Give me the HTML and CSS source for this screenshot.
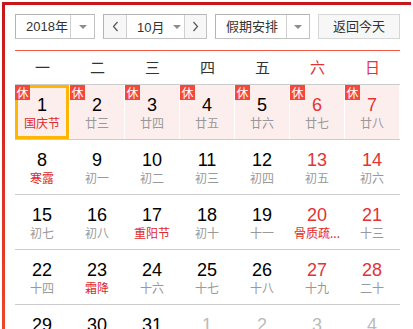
FILE: index.html
```html
<!DOCTYPE html>
<html lang="zh">
<head>
<meta charset="utf-8">
<title>日历</title>
<link rel="stylesheet" href="styles.css">
</head>
<body>
<div class="cal">
  <div class="toolbar">
    <div class="sel sel-year">
      <span class="sel-text">2018年</span>
      <span class="sel-arrow"><i class="tri"></i></span>
    </div>
    <div class="month-group">
      <span class="nav nav-prev"><svg width="7" height="11" viewBox="0 0 7 11"><polyline points="5.5,1 1.5,5.5 5.5,10" fill="none" stroke="#555" stroke-width="1.2"/></svg></span>
      <span class="month"><span class="month-text">10月</span><i class="tri"></i></span>
      <span class="nav nav-next"><svg width="7" height="11" viewBox="0 0 7 11"><polyline points="1.5,1 5.5,5.5 1.5,10" fill="none" stroke="#555" stroke-width="1.2"/></svg></span>
    </div>
    <div class="sel sel-holiday">
      <span class="sel-text">假期安排</span>
      <span class="sel-arrow"><i class="tri"></i></span>
    </div>
    <button class="today">返回今天</button>
  </div>
  <div class="divider"></div>
  <div class="weekdays">
    <span>一</span><span>二</span><span>三</span><span>四</span><span>五</span><span class="wkend">六</span><span class="wkend">日</span>
  </div>
  <div class="grid">
    <div class="row">
      <div class="cell rest selected"><i class="badge">休</i><span class="num">1</span><span class="lunar fest">国庆节</span></div>
      <div class="cell rest"><i class="badge">休</i><span class="num">2</span><span class="lunar">廿三</span></div>
      <div class="cell rest"><i class="badge">休</i><span class="num">3</span><span class="lunar">廿四</span></div>
      <div class="cell rest"><i class="badge">休</i><span class="num">4</span><span class="lunar">廿五</span></div>
      <div class="cell rest"><i class="badge">休</i><span class="num">5</span><span class="lunar">廿六</span></div>
      <div class="cell rest weekend"><i class="badge">休</i><span class="num">6</span><span class="lunar">廿七</span></div>
      <div class="cell rest weekend"><i class="badge">休</i><span class="num">7</span><span class="lunar">廿八</span></div>
    </div>
    <div class="row">
      <div class="cell"><span class="num">8</span><span class="lunar fest">寒露</span></div>
      <div class="cell"><span class="num">9</span><span class="lunar">初一</span></div>
      <div class="cell"><span class="num">10</span><span class="lunar">初二</span></div>
      <div class="cell"><span class="num">11</span><span class="lunar">初三</span></div>
      <div class="cell"><span class="num">12</span><span class="lunar">初四</span></div>
      <div class="cell weekend"><span class="num">13</span><span class="lunar">初五</span></div>
      <div class="cell weekend"><span class="num">14</span><span class="lunar">初六</span></div>
    </div>
    <div class="row">
      <div class="cell"><span class="num">15</span><span class="lunar">初七</span></div>
      <div class="cell"><span class="num">16</span><span class="lunar">初八</span></div>
      <div class="cell"><span class="num">17</span><span class="lunar fest">重阳节</span></div>
      <div class="cell"><span class="num">18</span><span class="lunar">初十</span></div>
      <div class="cell"><span class="num">19</span><span class="lunar">十一</span></div>
      <div class="cell weekend"><span class="num">20</span><span class="lunar fest">骨质疏...</span></div>
      <div class="cell weekend"><span class="num">21</span><span class="lunar">十三</span></div>
    </div>
    <div class="row">
      <div class="cell"><span class="num">22</span><span class="lunar">十四</span></div>
      <div class="cell"><span class="num">23</span><span class="lunar fest">霜降</span></div>
      <div class="cell"><span class="num">24</span><span class="lunar">十六</span></div>
      <div class="cell"><span class="num">25</span><span class="lunar">十七</span></div>
      <div class="cell"><span class="num">26</span><span class="lunar">十八</span></div>
      <div class="cell weekend"><span class="num">27</span><span class="lunar">十九</span></div>
      <div class="cell weekend"><span class="num">28</span><span class="lunar">二十</span></div>
    </div>
    <div class="row">
      <div class="cell"><span class="num">29</span><span class="lunar">廿一</span></div>
      <div class="cell"><span class="num">30</span><span class="lunar">廿二</span></div>
      <div class="cell"><span class="num">31</span><span class="lunar">廿三</span></div>
      <div class="cell other"><span class="num">1</span><span class="lunar">廿四</span></div>
      <div class="cell other"><span class="num">2</span><span class="lunar">廿五</span></div>
      <div class="cell other"><span class="num">3</span><span class="lunar">廿六</span></div>
      <div class="cell other"><span class="num">4</span><span class="lunar">廿七</span></div>
    </div>
  </div>
</div>
</body>
</html>
```

FILE: styles.css
```css
html, body {
  overflow: hidden;
}
body {
  margin: 2px;
  background: #fff;
  font-family: "Liberation Sans", "Noto Sans CJK SC", sans-serif;
  color: #333;
}
.cal {
  width: 412px;
  box-sizing: border-box;
  border: 3px solid #cc1b1b;
  border-image: linear-gradient(to bottom, #c8161b, #f04b2c) 1;
  padding: 9px 11px 0 10px;
}
.toolbar {
  display: flex;
  justify-content: space-between;
  height: 25px;
  font-size: 13px;
}
.sel, .month-group {
  display: flex;
  box-sizing: border-box;
  height: 25px;
  border: 1px solid #c2c2c2;
  border-top-color: #b4b4b4;
  border-left-color: #b4b4b4;
  background: #fff;
}
.sel-year { width: 80px; }
.sel-holiday { width: 95px; }
.sel-text {
  display: flex;
  align-items: center;
  line-height: 23px;
  color: #333;
}
.sel-year .sel-text { width: 54px; padding-left: 10px; box-sizing: border-box; }
.sel-holiday .sel-text { width: 70px; justify-content: center; padding-left: 2px; box-sizing: border-box; }
.sel-arrow {
  flex: 1;
  display: flex;
  align-items: center;
  justify-content: center;
  border-left: 1px solid #d0d0d0;
}
.tri {
  display: block;
  width: 0;
  height: 0;
  border-left: 4px solid transparent;
  border-right: 4px solid transparent;
  border-top: 4px solid #8c8c8c;
}
.month-group { width: 104px; }
.nav {
  display: flex;
  align-items: center;
  justify-content: center;
  width: 22px;
  background: #f7f7f7;
}
.nav-next { width: 21px; border-left: 1px solid #d0d0d0; }
.month {
  display: flex;
  align-items: center;
  width: 58px;
  box-sizing: border-box;
  padding-left: 10px;
  border-left: 1px solid #d0d0d0;
}
.month .tri { margin-left: 9px; }
.today {
  width: 82px;
  height: 25px;
  box-sizing: border-box;
  border: 1px solid #d6d6d6;
  background: #f7f7f7;
  font-family: "Liberation Sans", "Noto Sans CJK SC", sans-serif;
  font-size: 13px;
  color: #333;
  padding: 0;
  text-align: center;
  line-height: 23px;
}
.divider {
  height: 1px;
  margin-top: 11px;
  background: #f25a48;
}
.weekdays {
  display: grid;
  grid-template-columns: repeat(7, 55px);
  height: 33px;
  line-height: 33px;
  text-align: center;
  font-size: 15px;
  color: #333;
}
.weekdays .wkend { color: #e33333; }
.grid {
  border-top: 1px solid #cccccc;
}
.row {
  display: grid;
  grid-template-columns: repeat(7, 55px);
  height: 55px;
  box-sizing: border-box;
  border-bottom: 1px solid #cccccc;
}
.cell {
  position: relative;
  display: flex;
  flex-direction: column;
  align-items: center;
  border-right: 1px solid transparent;
  background-clip: padding-box;
}
.cell.rest { background-color: #fdeeee; }
.cell.selected { box-shadow: inset 0 0 0 3px #ffb602; }
.badge {
  position: absolute;
  left: 0;
  top: 0;
  width: 15px;
  height: 15px;
  background: #f5483a;
  color: #fff;
  font-style: normal;
  font-size: 12px;
  line-height: 15px;
  text-align: center;
  font-family: "Noto Sans CJK SC", sans-serif;
}
.num {
  padding-top: 10px;
  line-height: 20px;
  font-size: 18px;
  color: #000;
}
.lunar {
  line-height: 16px;
  font-size: 12px;
  color: #999;
  white-space: nowrap;
  font-family: "Noto Sans CJK SC", sans-serif;
}
.lunar.fest { color: #e02a2a; }
.weekend .num { color: #e33333; }
.other .num, .other .lunar { color: #bbbbbb; }
```
